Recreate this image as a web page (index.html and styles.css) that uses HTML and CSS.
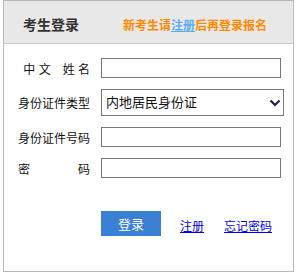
FILE: index.html
```html
<!DOCTYPE html>
<html lang="zh-CN">
<head>
<meta charset="utf-8">
<title>考生登录</title>
<link rel="stylesheet" href="styles.css">
</head>
<body>
<div class="box">
  <div class="head">
    <span class="title">考生登录</span>
    <span class="notice">新考生请<a class="notice-link" href="#">注册</a>后再登录报名</span>
  </div>
  <form class="form">
    <label class="label label-name">中 文　姓 名</label>
    <input class="field" type="text">
    <label class="label">身份证件类型</label>
    <div class="select-wrap">
      <select class="select"><option>内地居民身份证</option></select>
      <svg class="chevron" width="12" height="8" viewBox="0 0 12 8"><path d="M1.5 1.5 L6 6 L10.5 1.5" fill="none" stroke="#1a2340" stroke-width="2.2"/></svg>
    </div>
    <label class="label">身份证件号码</label>
    <input class="field" type="text">
    <label class="label label-justify">密码</label>
    <input class="field" type="password">
    <div class="actions">
      <button class="btn" type="button">登录</button>
      <a class="link" href="#">注册</a>
      <a class="link" href="#">忘记密码</a>
    </div>
  </form>
</div>
</body>
</html>
```
FILE: styles.css
```css
* { box-sizing: border-box; }
body {
  margin: 0;
  font-family: "Liberation Sans", "Noto Sans CJK SC", sans-serif;
  background: #fff;
}
.box {
  margin-left: 3px;
  width: 291px;
  height: 272px;
  border: 1px solid #b9b9b9;
}
.head {
  height: 43px;
  background: #e8e8e8;
  border-bottom: 1px solid #c8c8c8;
  display: flex;
  align-items: center;
  padding: 4px 0 0 19px;
}
.title {
  font-size: 14px;
  font-weight: bold;
  color: #333;
  width: 100px;
}
.notice {
  font-size: 12px;
  font-weight: bold;
  color: #ff8a00;
}
.notice-link {
  color: #5eaef5;
  text-decoration: underline;
}
.form {
  display: grid;
  grid-template-columns: 72px 183px;
  column-gap: 11px;
  row-gap: 11px;
  padding: 14px 0 0 14px;
  align-items: center;
}
.label {
  font-size: 12px;
  color: #111;
  text-align: right;
  white-space: pre;
}
.label-justify {
  text-align: justify;
  text-align-last: justify;
}
.field {
  width: 180px;
  height: 20px;
  border: 1px solid #767676;
  margin: 0;
  padding: 0 4px;
  font-size: 13px;
}
.select-wrap {
  position: relative;
  width: 183px;
  height: 27px;
}
.select {
  appearance: none;
  -webkit-appearance: none;
  width: 183px;
  height: 27px;
  border: 1px solid #767676;
  border-radius: 0;
  background: #fff;
  margin: 0;
  padding: 0 0 0 4px;
  font-family: "Liberation Sans", "Noto Sans CJK SC", sans-serif;
  font-size: 13px;
  color: #111;
}
.chevron {
  position: absolute;
  right: 3px;
  top: 10px;
}
.actions {
  grid-column: 2;
  margin-top: 22px;
  display: flex;
  align-items: center;
}
.btn {
  width: 60px;
  height: 25px;
  border: 0;
  margin: 0;
  padding: 0;
  background: #3a80d4;
  color: #fff;
  font-family: "Liberation Sans", "Noto Sans CJK SC", sans-serif;
  font-size: 13px;
}
.link {
  font-size: 12px;
  color: #0000ee;
  text-decoration: underline;
  margin-top: 4px;
  margin-left: 19px;
}
.link + .link {
  margin-left: 20px;
}
```
